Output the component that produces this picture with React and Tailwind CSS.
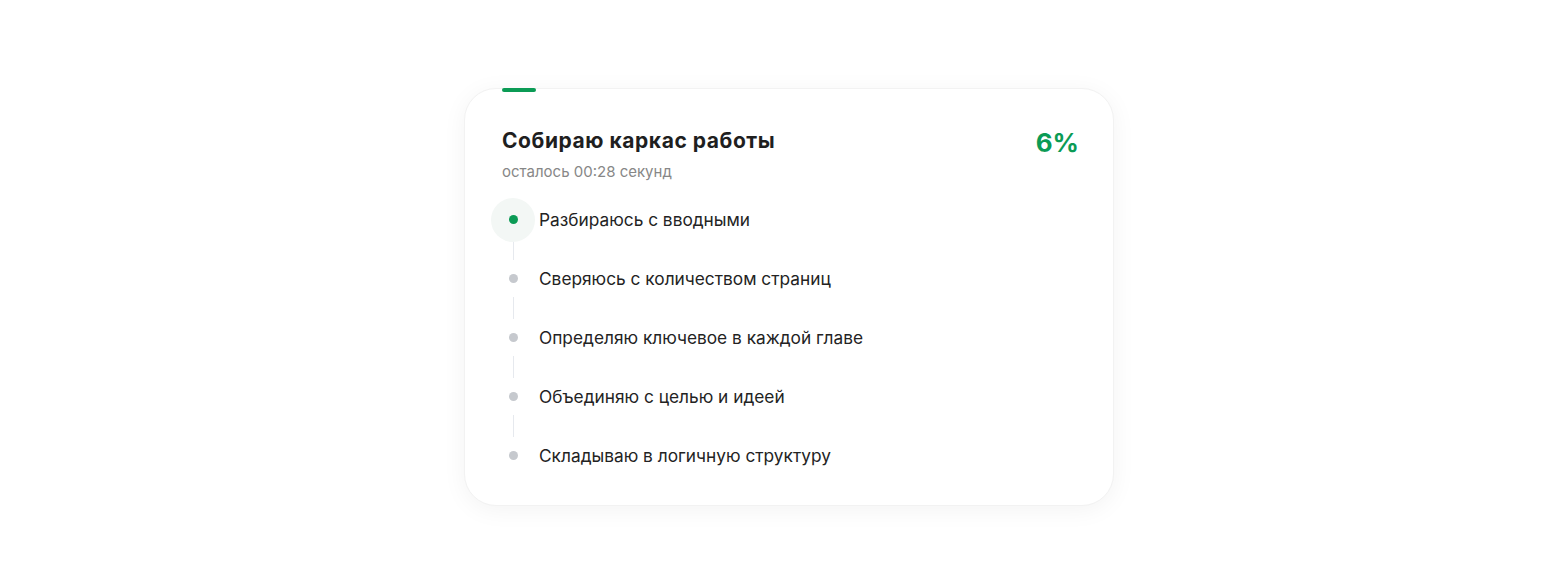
const steps = [
  "Разбираюсь с вводными",
  "Сверяюсь с количеством страниц",
  "Определяю ключевое в каждой главе",
  "Объединяю с целью и идеей",
  "Складываю в логичную структуру",
];

const StepRow = ({ label, active }) => (
  <div className="flex h-[37px] items-center gap-[15px]">
    <div className="relative flex h-full w-[22px] items-center justify-center">
      {active && (
        <span className="absolute left-1/2 top-1/2 h-[44px] w-[44px] -translate-x-1/2 -translate-y-1/2 rounded-full bg-[#f3f7f5]" />
      )}
      <span
        className={
          active
            ? "relative h-[9px] w-[9px] rounded-full bg-[#0b9b55]"
            : "relative h-[9px] w-[9px] rounded-full bg-[#c6c9ce]"
        }
      />
    </div>
    <span className="relative text-[17.3px] leading-none text-[#232323]">{label}</span>
  </div>
);

export default function App() {
  return (
    <div
      className="flex min-h-[584px] w-full justify-center bg-white pl-[18px] pt-[88px]"
      style={{ fontFamily: "Inter, 'Noto Sans', sans-serif" }}
    >
      <div className="relative h-[418px] w-[650px] rounded-[32px] border border-[#f2f2f2] bg-white pl-[37px] pr-[34px] pt-[40px] shadow-[0_4px_24px_rgba(0,0,0,0.05)]">
        <div className="absolute left-[37px] top-[-1px] h-[4px] w-[34px] rounded-full bg-[#0b9b55]" />
        <div className="flex items-start justify-between">
          <div>
            <h1 className="text-[21px] font-bold leading-[24px] tracking-[0.55px] text-[#1f1f1f]">
              Собираю каркас работы
            </h1>
            <p className="mt-[9px] text-[15px] leading-[20px] text-[#878787]">
              осталось 00:28 секунд
            </p>
          </div>
          <div className="text-[26px] font-bold leading-[28px] text-[#0b9b55]">6%</div>
        </div>
        <div className="mt-[19px] flex flex-col">
          {steps.map((s, i) => (
            <div key={i}>
              <StepRow label={s} active={i === 0} />
              {i < steps.length - 1 && (
                <div className="flex h-[22px] w-[22px] justify-center">
                  <div className="h-full w-px bg-[#e6e9ee]" />
                </div>
              )}
            </div>
          ))}
        </div>
      </div>
    </div>
  );
}
